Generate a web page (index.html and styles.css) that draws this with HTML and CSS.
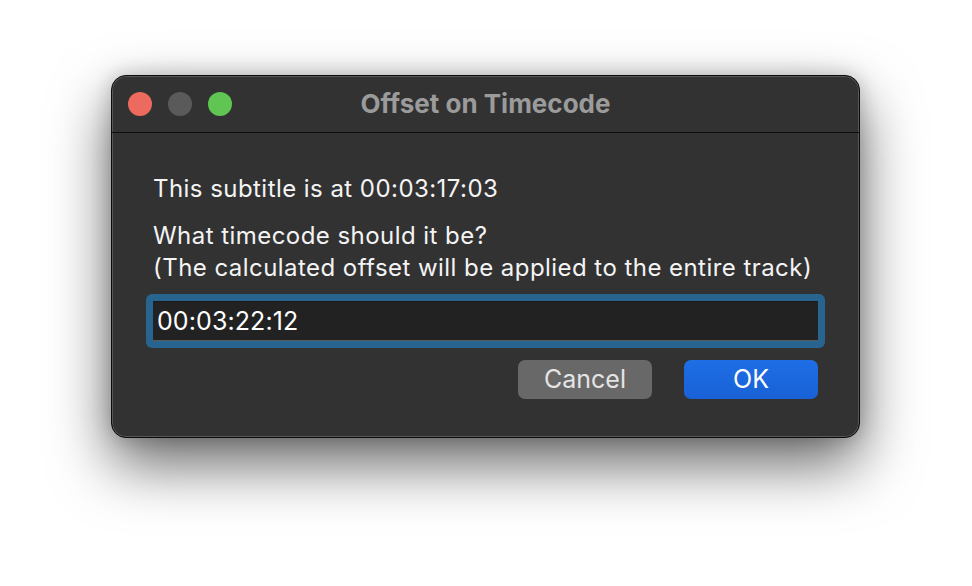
FILE: index.html
```
<!DOCTYPE html>
<html>
<head>
<meta charset="utf-8">
<link rel="stylesheet" href="styles.css">
</head>
<body>
<div class="stage">
  <div class="window">
    <div class="titlebar">
      <div class="lights">
        <span class="light red"></span>
        <span class="light gray"></span>
        <span class="light green"></span>
      </div>
      <div class="title">Offset on Timecode</div>
    </div>
    <div class="content">
      <p class="line first">This subtitle is at 00:03:17:03</p>
      <p class="line second">What timecode should it be?<br>(The calculated offset will be applied to the entire track)</p>
      <div class="ring"><div class="field">00:03:22:12</div></div>
      <div class="buttons">
        <div class="btn cancel">Cancel</div>
        <div class="btn ok">OK</div>
      </div>
    </div>
  </div>
</div>
</body>
</html>
```
FILE: styles.css
```
html, body {
  margin: 0;
  padding: 0;
  background: #ffffff;
  width: 972px;
  height: 586px;
  overflow: hidden;
}
.stage {
  padding: 75px 0 0 111px;
}
.window {
  width: 747px;
  height: 361px;
  background: #323232;
  border: 1px solid #0b0b0b;
  border-radius: 15px;
  box-shadow: inset 0 0 0 1px rgba(255,255,255,0.18), 0 26px 60px rgba(0,0,0,0.6), 0 0 20px rgba(0,0,0,0.2);
  font-family: Inter, "Noto Sans", sans-serif;
  color: #ffffff;
  display: flex;
  flex-direction: column;
  overflow: hidden;
}
.titlebar {
  height: 56px;
  border-bottom: 1px solid #0e0e0e;
  position: relative;
  display: flex;
  align-items: center;
  justify-content: center;
}
.lights {
  position: absolute;
  left: 16px;
  top: 16px;
  display: flex;
  gap: 16px;
}
.light {
  width: 24px;
  height: 24px;
  border-radius: 50%;
  display: block;
}
.red { background: #ec6a5e; }
.gray { background: #5a5a5a; }
.green { background: #61c554; }
.title {
  font-weight: 700;
  font-size: 26px;
  line-height: 31px;
  margin-top: -2px;
  color: #9b9b9b;
}
.content {
  padding: 0 34px;
  display: flex;
  flex-direction: column;
}
.line {
  margin: 0;
  padding-left: 7px;
  font-size: 24px;
  line-height: 32px;
  letter-spacing: 0.45px;
  color: #f4f4f4;
}
.first {
  margin-top: 40px;
}
.second {
  margin-top: 15px;
}
.ring {
  margin-top: 10px;
  width: 679px;
  height: 54px;
  box-sizing: border-box;
  padding: 7px;
  background: #27648f;
  border-radius: 6px;
}
.field {
  height: 40px;
  box-sizing: border-box;
  background: #222222;
  border-top: 1px solid #1a1a1a;
  border-bottom: 1px solid #5a5a5a;
  font-size: 25px;
  line-height: 37px;
  padding-top: 1px;
  padding-left: 4px;
  letter-spacing: 0.1px;
  color: #ffffff;
}
.buttons {
  margin-top: 12px;
  display: flex;
  justify-content: flex-end;
  gap: 32px;
  padding-right: 7px;
}
.btn {
  width: 134px;
  height: 39px;
  border-radius: 7px;
  font-size: 25px;
  line-height: 39px;
  text-align: center;
}
.cancel {
  background: #686868;
  color: #e4e4e4;
}
.ok {
  background: linear-gradient(#1e6ee5, #1961d6);
  color: #ffffff;
}
```
